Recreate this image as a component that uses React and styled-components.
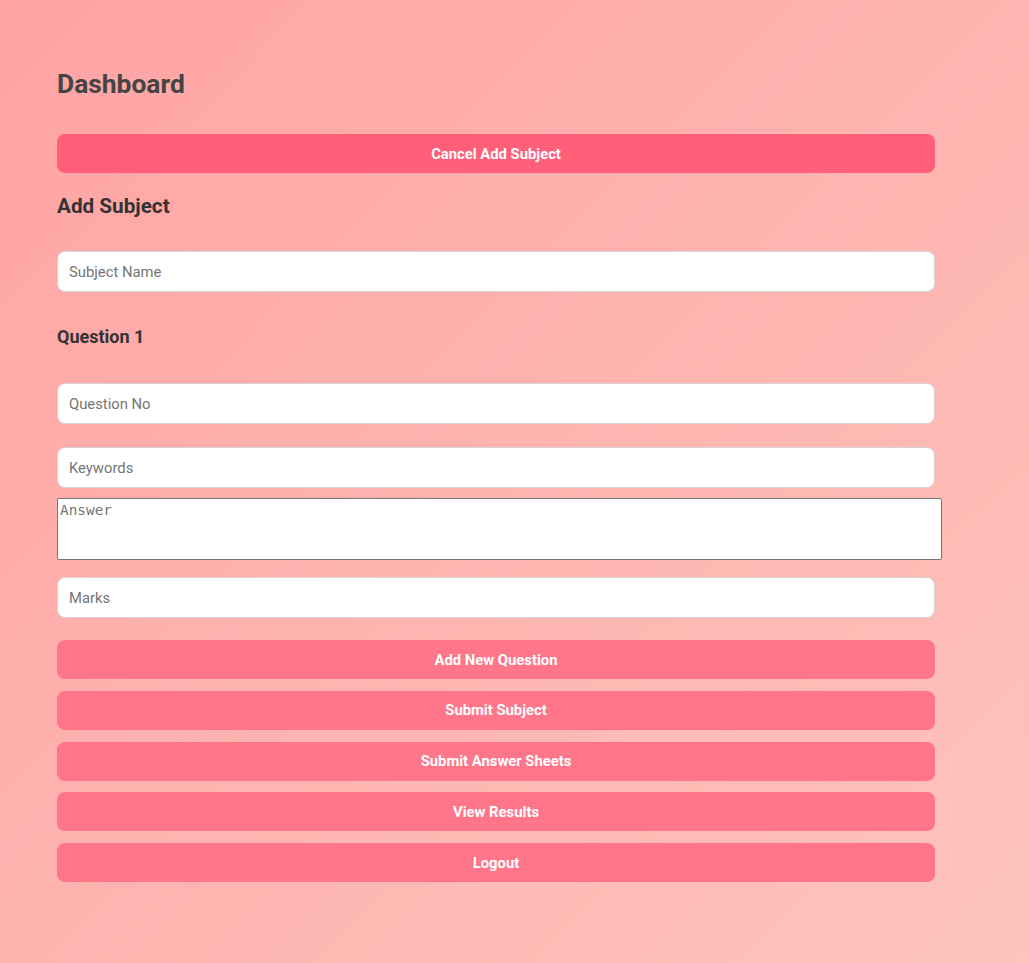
import React from "react";
import styled, { createGlobalStyle } from "styled-components";

const GlobalStyle = createGlobalStyle`
  html, body { margin: 0; padding: 0; }
  body {
    min-height: 963px;
    background: linear-gradient(135deg, #ffa3a4 0%, #fdc4bb 100%);
    font-family: Roboto, "Liberation Sans", sans-serif;
  }
`;

const Page = styled.div`
  padding: 68px 94px 80px 57px;
  width: 878px;
`;

const Title = styled.h1`
  margin: 0 0 34px;
  font-size: 26.4px;
  line-height: 32px;
  font-weight: 700;
  color: #444;
`;

const Button = styled.button`
  display: block;
  width: 100%;
  height: 39px;
  border: none;
  border-radius: 8px;
  background: ${(p) => (p.$strong ? "#ff5f78" : "#ff7589")};
  color: #fff;
  font-family: Roboto, "Liberation Sans", sans-serif;
  font-size: 14.8px;
  font-weight: 700;
  cursor: pointer;
  padding: 0;
`;

const SectionTitle = styled.h2`
  margin: ${(p) => p.$m};
  font-size: ${(p) => p.$size};
  line-height: 24px;
  font-weight: 700;
  color: #333;
`;

const Input = styled.input`
  display: block;
  box-sizing: border-box;
  width: 100%;
  height: 41px;
  margin: ${(p) => p.$m || "0"};
  padding: 0 11px;
  border: 1px solid #d9d2d2;
  border-radius: 8px;
  background: #fff;
  font-family: Roboto, "Liberation Sans", sans-serif;
  font-size: 14.8px;
  color: #333;
  &::placeholder { color: #757575; }
`;

const TextArea = styled.textarea`
  display: block;
  width: 879px;
  height: 56px;
  margin: 10px 0 17px;
  padding: 2px;
  border: 1px solid #767676;
  border-radius: 2px;
  background: #fff;
  font-family: "DejaVu Sans Mono", monospace;
  font-size: 14.4px;
  line-height: 18px;
  resize: none;
  &::placeholder { color: #757575; }
`;

const ButtonStack = styled.div`
  display: flex;
  flex-direction: column;
  gap: 11.75px;
  margin-top: 22px;
`;

export default function App() {
  return (
    <>
      <GlobalStyle />
      <Page>
        <Title>Dashboard</Title>
        <Button $strong>Cancel Add Subject</Button>
        <SectionTitle $size="20.7px" $m="21px 0 33px">Add Subject</SectionTitle>
        <Input placeholder="Subject Name" />
        <SectionTitle $size="18px" $m="33px 0 34px">Question 1</SectionTitle>
        <Input placeholder="Question No" $m="0 0 23px" />
        <Input placeholder="Keywords" />
        <TextArea placeholder="Answer" />
        <Input placeholder="Marks" />
        <ButtonStack>
          <Button>Add New Question</Button>
          <Button>Submit Subject</Button>
          <Button>Submit Answer Sheets</Button>
          <Button>View Results</Button>
          <Button>Logout</Button>
        </ButtonStack>
      </Page>
    </>
  );
}
